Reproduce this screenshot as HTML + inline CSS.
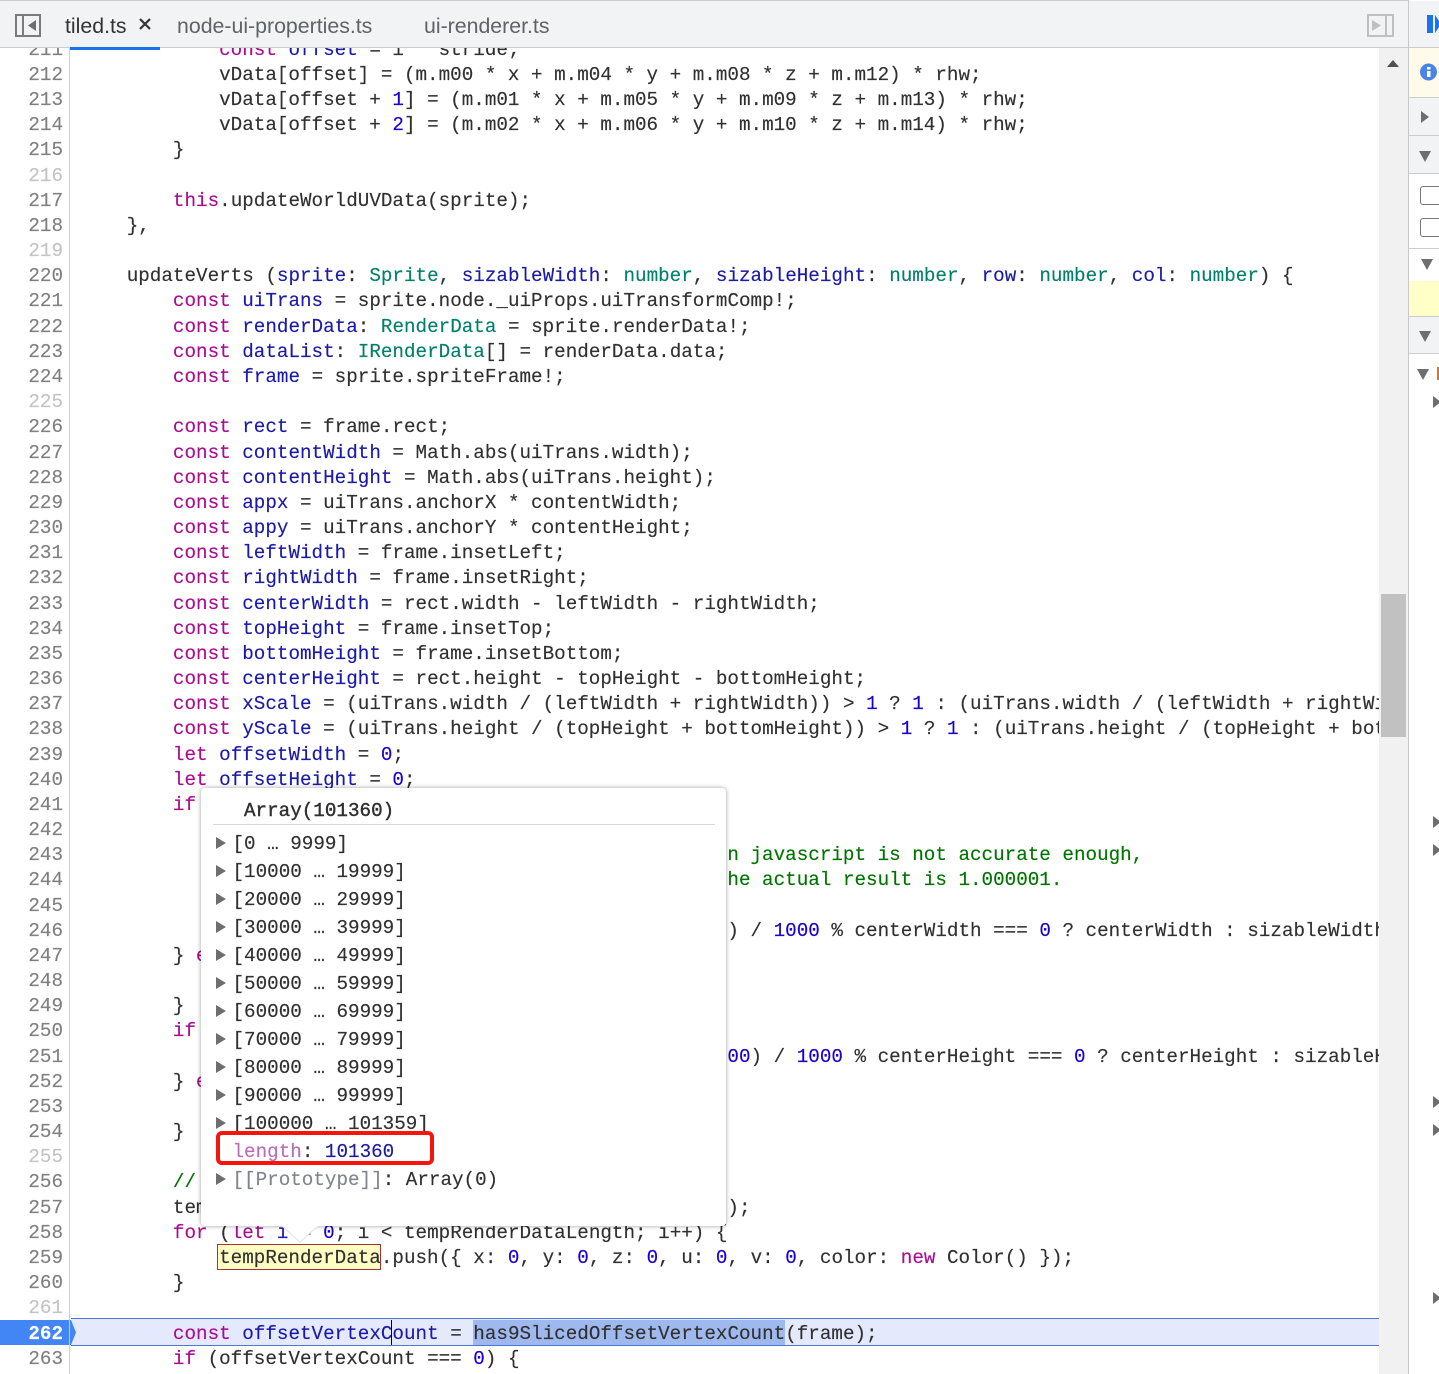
<!DOCTYPE html>
<html><head><meta charset="utf-8"><style>
html,body{margin:0;padding:0;background:#fff}
#root{position:relative;width:1439px;height:1374px;overflow:hidden;background:#fff;font-family:"Liberation Mono",monospace;font-size:19.25px;color:#303030;-webkit-text-stroke:.15px currentColor}
.abs{position:absolute}
#gutter{position:absolute;left:0;top:48px;width:69px;height:1326px;overflow:hidden;border-right:1px solid #ccc;z-index:2}
#nums{position:absolute;left:0;top:-10.25px;width:63px;text-align:right;color:#808080;line-height:25.17px}
#nums i{font-style:normal;color:#c4c4c4}
#nums b{font-weight:bold;color:#fff}
#code{position:absolute;left:80.500px;top:48px;width:1298.500px;height:1326px;overflow:hidden}
#lines{position:absolute;left:0;top:-10.25px;white-space:pre;line-height:25.17px}
.k{color:#aa0d91}.d{color:#1a1aa6}.t{color:#00806b}.n{color:#1c00cf}.c{color:#007400}
#tabs{position:absolute;left:0;top:0;width:1408px;height:47px;background:#f1f3f4;border-top:1px solid #ccc;box-sizing:border-box;font-family:"Liberation Sans",sans-serif;font-size:21.3px;color:#5f6368;-webkit-text-stroke:0}
#tabs span{position:absolute;top:12px;line-height:26px;white-space:pre}
#pop{position:absolute;left:201px;top:788px;width:525px;height:438px;background:#fff;border-radius:4px;box-shadow:0 0 5px rgba(0,0,0,.38)}
.r{position:absolute;left:31.500px;line-height:28px;height:28px;white-space:pre;margin-top:1.500px}
.tri{position:absolute;left:15px;width:0;height:0;margin-top:1px;border-left:10px solid #6e6e70;border-top:6px solid transparent;border-bottom:6px solid transparent;-webkit-text-stroke:0}
.rp{position:absolute;left:1409px;width:30px;box-sizing:border-box}
.ar{position:absolute;width:0;height:0;border-left:8px solid #6e6e70;border-top:6px solid transparent;border-bottom:6px solid transparent}
.dn{position:absolute;width:0;height:0;border-top:11px solid #6e6e70;border-left:6.5px solid transparent;border-right:6.5px solid transparent}
</style></head><body><div id="root">

<div id="gutter"><div id="nums">211
212
213
214
215
<i>216</i>
217
218
<i>219</i>
220
221
222
223
224
<i>225</i>
226
227
228
229
230
231
232
233
234
235
236
237
238
239
240
241
242
243
244
245
246
247
248
249
250
251
252
253
254
<i>255</i>
256
257
258
259
260
<i>261</i>
<b>262</b>
263</div></div>

<div class="abs" style="left:71px;top:1318px;width:1308px;height:28px;box-sizing:border-box;background:#e4e9fb;border-top:1px solid #4a76e0;border-bottom:1px solid #4a76e0"></div>
<div class="abs" style="left:473px;top:1320px;width:312px;height:25px;background:#9fb9ef"></div>
<div class="abs" style="left:217px;top:1244px;width:164px;height:26px;box-sizing:border-box;background:#ffffc4;border:1px solid #a83232"></div>

<div id="code"><div id="lines">            <span class="k">const</span> <span class="d">offset</span> = i * stride;
            vData[offset] = (m.m00 * x + m.m04 * y + m.m08 * z + m.m12) * rhw;
            vData[offset + <span class="n">1</span>] = (m.m01 * x + m.m05 * y + m.m09 * z + m.m13) * rhw;
            vData[offset + <span class="n">2</span>] = (m.m02 * x + m.m06 * y + m.m10 * z + m.m14) * rhw;
        }

        <span class="k">this</span>.updateWorldUVData(sprite);
    },

    updateVerts (<span class="d">sprite</span>: <span class="t">Sprite</span>, <span class="d">sizableWidth</span>: <span class="t">number</span>, <span class="d">sizableHeight</span>: <span class="t">number</span>, <span class="d">row</span>: <span class="t">number</span>, <span class="d">col</span>: <span class="t">number</span>) {
        <span class="k">const</span> <span class="d">uiTrans</span> = sprite.node._uiProps.uiTransformComp!;
        <span class="k">const</span> <span class="d">renderData</span>: <span class="t">RenderData</span> = sprite.renderData!;
        <span class="k">const</span> <span class="d">dataList</span>: <span class="t">IRenderData</span>[] = renderData.data;
        <span class="k">const</span> <span class="d">frame</span> = sprite.spriteFrame!;

        <span class="k">const</span> <span class="d">rect</span> = frame.rect;
        <span class="k">const</span> <span class="d">contentWidth</span> = Math.abs(uiTrans.width);
        <span class="k">const</span> <span class="d">contentHeight</span> = Math.abs(uiTrans.height);
        <span class="k">const</span> <span class="d">appx</span> = uiTrans.anchorX * contentWidth;
        <span class="k">const</span> <span class="d">appy</span> = uiTrans.anchorY * contentHeight;
        <span class="k">const</span> <span class="d">leftWidth</span> = frame.insetLeft;
        <span class="k">const</span> <span class="d">rightWidth</span> = frame.insetRight;
        <span class="k">const</span> <span class="d">centerWidth</span> = rect.width - leftWidth - rightWidth;
        <span class="k">const</span> <span class="d">topHeight</span> = frame.insetTop;
        <span class="k">const</span> <span class="d">bottomHeight</span> = frame.insetBottom;
        <span class="k">const</span> <span class="d">centerHeight</span> = rect.height - topHeight - bottomHeight;
        <span class="k">const</span> <span class="d">xScale</span> = (uiTrans.width / (leftWidth + rightWidth)) &gt; <span class="n">1</span> ? <span class="n">1</span> : (uiTrans.width / (leftWidth + rightWidth));
        <span class="k">const</span> <span class="d">yScale</span> = (uiTrans.height / (topHeight + bottomHeight)) &gt; <span class="n">1</span> ? <span class="n">1</span> : (uiTrans.height / (topHeight + bottomHeight));
        <span class="k">let</span> <span class="d">offsetWidth</span> = <span class="n">0</span>;
        <span class="k">let</span> <span class="d">offsetHeight</span> = <span class="n">0</span>;
        <span class="k">if</span>

                                                        <span class="c">n javascript is not accurate enough,</span>
                                                        <span class="c">he actual result is 1.000001.</span>

                                                        ) / <span class="n">1000</span> % centerWidth === <span class="n">0</span> ? centerWidth : sizableWidth;
        } <span class="k">else</span>

        }
        <span class="k">if</span>
                                                        <span class="n">00</span>) / <span class="n">1000</span> % centerHeight === <span class="n">0</span> ? centerHeight : sizableHeight;
        } <span class="k">else</span>

        }

        <span class="c">//</span>
        tempRenderData.length = tempRenderDataLength    );
        <span class="k">for</span> (<span class="k">let</span> <span class="d">i</span> = <span class="n">0</span>; i &lt; tempRenderDataLength; i++) {
            tempRenderData.push({ x: <span class="n">0</span>, y: <span class="n">0</span>, z: <span class="n">0</span>, u: <span class="n">0</span>, v: <span class="n">0</span>, color: <span class="k">new</span> Color() });
        }

        <span class="k">const</span> <span class="d">offsetVertexCount</span> = has9SlicedOffsetVertexCount(frame);
        <span class="k">if</span> (offsetVertexCount === <span class="n">0</span>) {</div></div>

<div class="abs" style="left:391px;top:1320px;width:1px;height:25px;background:#000"></div>

<svg class="abs" style="left:0;top:1320px;z-index:1" width="78" height="25"><path d="M0 0H71L76 12.5L71 25H0Z" fill="#4285f4"/></svg>

<div class="abs" style="left:1379px;top:48px;width:29px;height:1326px;background:#f1f1f1"></div>
<div class="abs" style="left:1381px;top:594px;width:25px;height:143px;background:#c1c1c1"></div>
<div class="abs" style="left:1387px;top:60px;width:0;height:0;border-bottom:7px solid #505050;border-left:6.5px solid transparent;border-right:6.5px solid transparent"></div>

<div id="tabs">
<svg class="abs" style="left:15px;top:13px" width="27" height="24" fill="none"><rect x="1" y="1" width="24" height="21" stroke="#7b7b7b" stroke-width="2"/><path d="M8 1V22" stroke="#7b7b7b" stroke-width="2"/><path d="M21 6V17L13 11.500Z" fill="#6e6e70"/></svg>
<span style="left:65px;color:#333">tiled.ts</span>
<svg class="abs" style="left:138px;top:16px" width="14" height="14"><path d="M2 2L12 12M12 2L2 12" stroke="#333" stroke-width="2.200"/></svg>
<span style="left:177px">node-ui-properties.ts</span>
<span style="left:424px">ui-renderer.ts</span>
<svg class="abs" style="left:1367px;top:13px" width="28" height="24" fill="none"><rect x="1" y="1" width="25" height="21" stroke="#c0c0c0" stroke-width="2"/><path d="M19 1V22" stroke="#c0c0c0" stroke-width="2"/><path d="M5 6V17L14 11.500Z" fill="#c0c0c0"/></svg>
</div>
<div class="abs" style="left:0;top:47px;width:1439px;height:1px;background:#ccc"></div>
<div class="abs" style="left:70px;top:47px;width:90px;height:3px;background:#1a73e8"></div>

<div class="abs" style="left:1408px;top:0;width:1px;height:1374px;background:#c8c8c8"></div>
<div class="rp" style="top:1px;height:46px;background:#f1f3f4"></div>
<div class="abs" style="left:1427px;top:15px;width:6px;height:18px;background:#1a73e8"></div>
<div class="abs" style="left:1435px;top:15px;width:0;height:0;border-left:6px solid #1a73e8;border-top:9px solid transparent;border-bottom:9px solid transparent"></div>
<div class="rp" style="top:48px;height:50px;background:#fffbeb;border-bottom:1px solid #ccc"></div>
<svg class="abs" style="left:1420px;top:63px" width="18" height="18"><circle cx="8.500" cy="9" r="8.500" fill="#4a84e4"/><rect x="7" y="8" width="3.500" height="6" fill="#fff"/><rect x="7" y="4" width="3.500" height="2.500" fill="#fff"/></svg>
<div class="rp" style="top:98px;height:38px;background:#f1f3f4;border-bottom:1px solid #ccc"></div>
<div class="ar" style="left:1421px;top:111px"></div>
<div class="rp" style="top:136px;height:38px;background:#f1f3f4;border-bottom:1px solid #ccc"></div>
<div class="dn" style="left:1419px;top:151px"></div>
<div class="rp" style="top:174px;height:75px;background:#fff;border-bottom:1px solid #ccc"></div>
<div class="abs" style="left:1420px;top:186px;width:24px;height:19px;box-sizing:border-box;border:1.500px solid #777;border-radius:3px"></div>
<div class="abs" style="left:1420px;top:218px;width:24px;height:19px;box-sizing:border-box;border:1.500px solid #777;border-radius:3px"></div>
<div class="dn" style="left:1421px;top:259px"></div>
<div class="rp" style="top:281px;height:35px;background:#ffffc8"></div>
<div class="rp" style="top:316px;height:38px;background:#f1f3f4;border-top:1px solid #ccc;border-bottom:1px solid #ccc"></div>
<div class="dn" style="left:1419px;top:331px"></div>
<div class="dn" style="left:1417px;top:369px"></div>
<div class="abs" style="left:1437px;top:367px;width:2px;height:13px;background:#c87a30"></div>
<div class="ar" style="left:1433px;top:396px"></div>
<div class="ar" style="left:1433px;top:816px"></div>
<div class="ar" style="left:1433px;top:844px"></div>
<div class="ar" style="left:1433px;top:1096px"></div>
<div class="ar" style="left:1433px;top:1124px"></div>
<div class="ar" style="left:1433px;top:1292px"></div>

<svg class="abs" style="left:282px;top:1224px;z-index:3" width="36" height="20"><path d="M0 2L18 18L36 2" fill="#fff" stroke="#e2e2e2"/><rect x="0" y="0" width="36" height="2.500" fill="#fff"/></svg>

<div id="pop">
<div class="abs" style="left:43px;top:9px;line-height:28px;white-space:pre;-webkit-text-stroke:.4px #303030">Array(101360)</div>
<div class="abs" style="left:12px;top:36px;width:502px;height:1px;background:#d9d9d9"></div>
<div class="tri" style="top:48px"></div><div class="r" style="top:40px">[0 … 9999]</div>
<div class="tri" style="top:76px"></div><div class="r" style="top:68px">[10000 … 19999]</div>
<div class="tri" style="top:104px"></div><div class="r" style="top:96px">[20000 … 29999]</div>
<div class="tri" style="top:132px"></div><div class="r" style="top:124px">[30000 … 39999]</div>
<div class="tri" style="top:160px"></div><div class="r" style="top:152px">[40000 … 49999]</div>
<div class="tri" style="top:188px"></div><div class="r" style="top:180px">[50000 … 59999]</div>
<div class="tri" style="top:216px"></div><div class="r" style="top:208px">[60000 … 69999]</div>
<div class="tri" style="top:244px"></div><div class="r" style="top:236px">[70000 … 79999]</div>
<div class="tri" style="top:272px"></div><div class="r" style="top:264px">[80000 … 89999]</div>
<div class="tri" style="top:300px"></div><div class="r" style="top:292px">[90000 … 99999]</div>
<div class="tri" style="top:328px"></div><div class="r" style="top:320px">[100000 … 101359]</div>
<div class="r" style="top:348px"><span style="color:#b86fb8">length</span>: <span style="color:#1a1aa6">101360</span></div>
<div class="tri" style="top:384px"></div><div class="r" style="top:376px"><span style="color:#80868b">[[Prototype]]</span>: Array(0)</div>
</div>

<div class="abs" style="left:216px;top:1131px;width:218px;height:34px;box-sizing:border-box;border:4.500px solid #f5150c;border-radius:6px"></div>

</div></body></html>
